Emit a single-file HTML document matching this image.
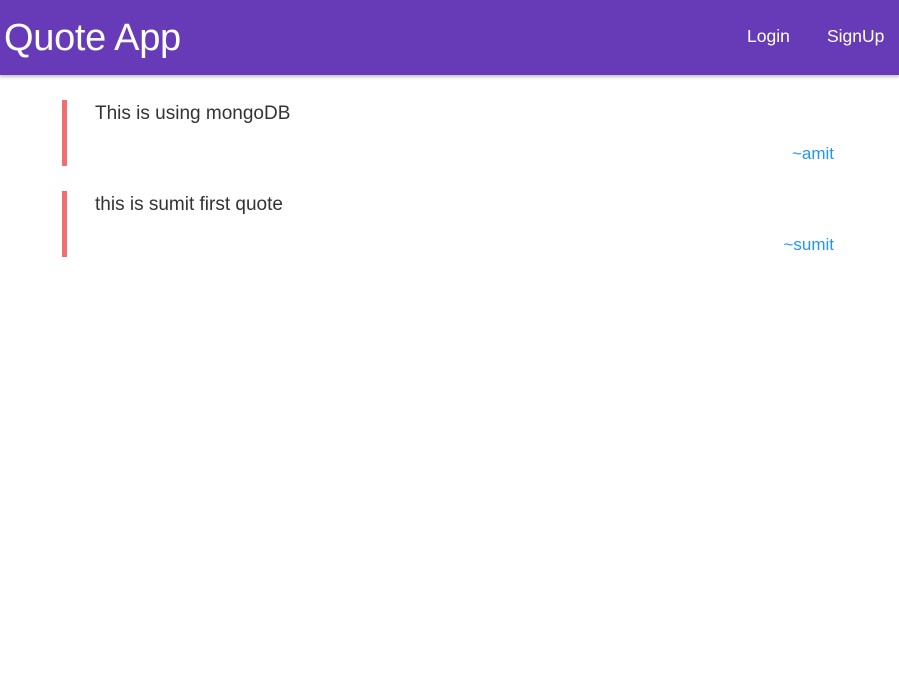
<!DOCTYPE html>
<html><head><meta charset="utf-8"><style>
*{box-sizing:border-box;margin:0;padding:0}
body{width:899px;height:683px;background:#fff;font-family:"Liberation Sans",sans-serif;overflow:hidden;position:relative}
nav{position:absolute;left:0;top:0;width:899px;height:75px;background:#673ab7;box-shadow:0 2px 3px rgba(0,0,0,.25);color:#fff}
.logo{position:absolute;left:4px;top:16px;font-size:38px;line-height:44px;letter-spacing:-0.3px}
.link{position:absolute;top:25px;font-size:17.5px;line-height:22px}
.q{position:absolute;left:62px;width:772px;height:66px;border-left:5px solid #ee6e73}
.q p{position:absolute;left:28px;top:2px;font-size:19px;line-height:24px;color:#333}
.q span{position:absolute;right:0;top:44px;font-size:17px;line-height:20px;color:#2196f3}
</style></head><body>
<nav><div class="logo">Quote App</div><div class="link" style="left:747px">Login</div><div class="link" style="left:827px">SignUp</div></nav>
<div class="q" style="top:100px"><p>This is using mongoDB</p><span>~amit</span></div>
<div class="q" style="top:191px"><p>this is sumit first quote</p><span>~sumit</span></div>
</body></html>
